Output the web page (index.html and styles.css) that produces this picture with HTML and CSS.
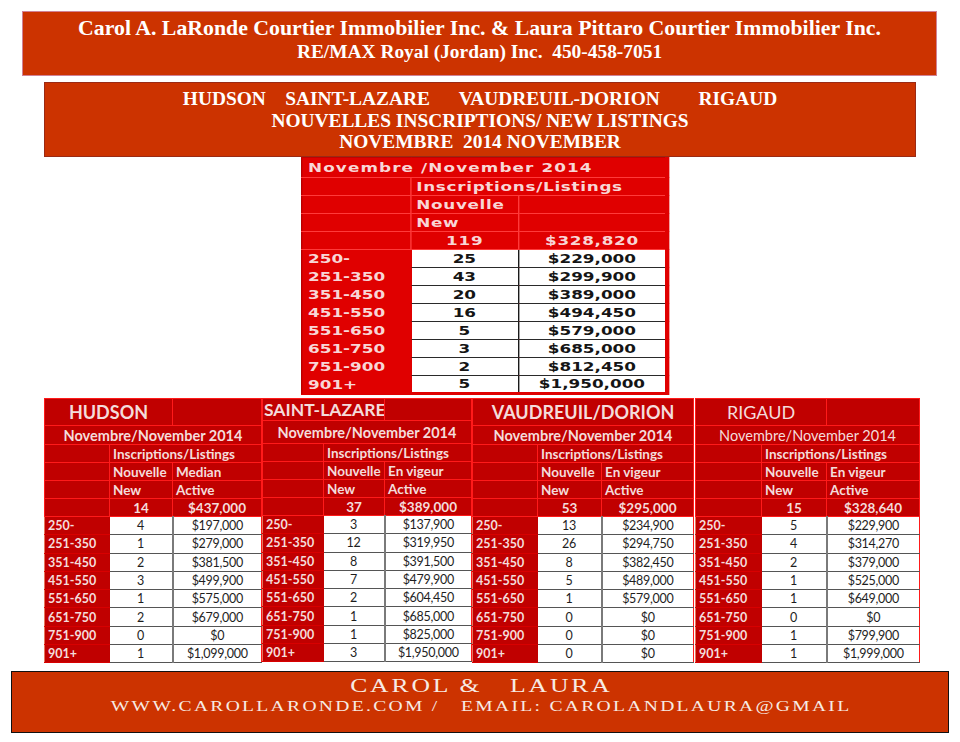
FILE: index.html
```html
<!DOCTYPE html>
<html lang="fr">
<head>
<meta charset="utf-8">
<title>Nouvelles inscriptions - Novembre 2014</title>
<link rel="stylesheet" href="styles.css">
</head>
<body>
<div class="page">
  <header class="top">
    <div class="l1">Carol A. LaRonde Courtier Immobilier Inc. &amp; Laura Pittaro Courtier Immobilier Inc.</div>
    <div class="l2">RE/MAX Royal (Jordan) Inc.  450-458-7051</div>
  </header>

  <section class="banner">
    <div class="bl">HUDSON    SAINT-LAZARE      VAUDREUIL-DORION        RIGAUD</div>
    <div class="bl">NOUVELLES INSCRIPTIONS/ NEW LISTINGS</div>
    <div class="bl">NOVEMBRE  2014 NOVEMBER</div>
  </section>

  <div class="summary">
    <table class="sum">
      <colgroup><col class="s1"><col class="s2"><col class="s3"></colgroup>
      <tr class="s-title"><td colspan="3">Novembre /November 2014</td></tr>
      <tr class="s-h"><td></td><td colspan="2" class="hl wide">Inscriptions/Listings</td></tr>
      <tr class="s-h"><td></td><td class="hl">Nouvelle</td><td></td></tr>
      <tr class="s-h"><td></td><td class="hl">New</td><td></td></tr>
      <tr class="s-h"><td></td><td class="hc">119</td><td class="hc">$328,820</td></tr>
      <tr class="d"><th>250-</th><td>25</td><td>$229,000</td></tr>
      <tr class="d"><th>251-350</th><td>43</td><td>$299,900</td></tr>
      <tr class="d"><th>351-450</th><td>20</td><td>$389,000</td></tr>
      <tr class="d"><th>451-550</th><td>16</td><td>$494,450</td></tr>
      <tr class="d"><th>551-650</th><td>5</td><td>$579,000</td></tr>
      <tr class="d"><th>651-750</th><td>3</td><td>$685,000</td></tr>
      <tr class="d"><th>751-900</th><td>2</td><td>$812,450</td></tr>
      <tr class="d last"><th>901+</th><td>5</td><td>$1,950,000</td></tr>
    </table>
  </div>

  <div class="cities">
    <table class="city hudson">
      <colgroup><col class="c1"><col class="c2"><col class="c3"></colgroup>
      <tr class="t-title"><td colspan="2" class="title center">HUDSON</td><td></td></tr>
      <tr class="t-month"><td colspan="3" class="month">Novembre/November 2014</td></tr>
      <tr class="t-h"><td></td><td colspan="2" class="hl">Inscriptions/Listings</td></tr>
      <tr class="t-h"><td></td><td class="hl">Nouvelle</td><td class="hl">Median</td></tr>
      <tr class="t-h"><td></td><td class="hl">New</td><td class="hl">Active</td></tr>
      <tr class="t-h"><td></td><td class="hc">14</td><td class="hc">$437,000</td></tr>
      <tr class="d"><th>250-</th><td>4</td><td>$197,000</td></tr>
      <tr class="d"><th>251-350</th><td>1</td><td>$279,000</td></tr>
      <tr class="d"><th>351-450</th><td>2</td><td>$381,500</td></tr>
      <tr class="d"><th>451-550</th><td>3</td><td>$499,900</td></tr>
      <tr class="d"><th>551-650</th><td>1</td><td>$575,000</td></tr>
      <tr class="d"><th>651-750</th><td>2</td><td>$679,000</td></tr>
      <tr class="d"><th>751-900</th><td>0</td><td>$0</td></tr>
      <tr class="d"><th>901+</th><td>1</td><td>$1,099,000</td></tr>
    </table>

    <table class="city lazare">
      <colgroup><col class="c1"><col class="c2"><col class="c3"></colgroup>
      <tr class="t-title"><td colspan="2" class="title left">SAINT-LAZARE</td><td></td></tr>
      <tr class="t-month"><td colspan="3" class="month">Novembre/November 2014</td></tr>
      <tr class="t-h"><td></td><td colspan="2" class="hl">Inscriptions/Listings</td></tr>
      <tr class="t-h"><td></td><td class="hl">Nouvelle</td><td class="hl">En vigeur</td></tr>
      <tr class="t-h"><td></td><td class="hl">New</td><td class="hl">Active</td></tr>
      <tr class="t-h"><td></td><td class="hc">37</td><td class="hc">$389,000</td></tr>
      <tr class="d"><th>250-</th><td>3</td><td>$137,900</td></tr>
      <tr class="d"><th>251-350</th><td>12</td><td>$319,950</td></tr>
      <tr class="d"><th>351-450</th><td>8</td><td>$391,500</td></tr>
      <tr class="d"><th>451-550</th><td>7</td><td>$479,900</td></tr>
      <tr class="d"><th>551-650</th><td>2</td><td>$604,450</td></tr>
      <tr class="d"><th>651-750</th><td>1</td><td>$685,000</td></tr>
      <tr class="d"><th>751-900</th><td>1</td><td>$825,000</td></tr>
      <tr class="d"><th>901+</th><td>3</td><td>$1,950,000</td></tr>
    </table>

    <table class="city vaudreuil">
      <colgroup><col class="c1"><col class="c2"><col class="c3"></colgroup>
      <tr class="t-title"><td colspan="3" class="title center">VAUDREUIL/DORION</td></tr>
      <tr class="t-month"><td colspan="3" class="month">Novembre/November 2014</td></tr>
      <tr class="t-h"><td></td><td colspan="2" class="hl">Inscriptions/Listings</td></tr>
      <tr class="t-h"><td></td><td class="hl">Nouvelle</td><td class="hl">En vigeur</td></tr>
      <tr class="t-h"><td></td><td class="hl">New</td><td class="hl">Active</td></tr>
      <tr class="t-h"><td></td><td class="hc">53</td><td class="hc">$295,000</td></tr>
      <tr class="d"><th>250-</th><td>13</td><td>$234,900</td></tr>
      <tr class="d"><th>251-350</th><td>26</td><td>$294,750</td></tr>
      <tr class="d"><th>351-450</th><td>8</td><td>$382,450</td></tr>
      <tr class="d"><th>451-550</th><td>5</td><td>$489,000</td></tr>
      <tr class="d"><th>551-650</th><td>1</td><td>$579,000</td></tr>
      <tr class="d"><th>651-750</th><td>0</td><td>$0</td></tr>
      <tr class="d"><th>751-900</th><td>0</td><td>$0</td></tr>
      <tr class="d"><th>901+</th><td>0</td><td>$0</td></tr>
    </table>

    <table class="city rigaud">
      <colgroup><col class="c1"><col class="c2"><col class="c3"></colgroup>
      <tr class="t-title"><td colspan="2" class="title center light">RIGAUD</td><td></td></tr>
      <tr class="t-month"><td colspan="3" class="month light">Novembre/November 2014</td></tr>
      <tr class="t-h"><td></td><td colspan="2" class="hl">Inscriptions/Listings</td></tr>
      <tr class="t-h"><td></td><td class="hl">Nouvelle</td><td class="hl">En vigeur</td></tr>
      <tr class="t-h"><td></td><td class="hl">New</td><td class="hl">Active</td></tr>
      <tr class="t-h"><td></td><td class="hc">15</td><td class="hc">$328,640</td></tr>
      <tr class="d"><th>250-</th><td>5</td><td>$229,900</td></tr>
      <tr class="d"><th>251-350</th><td>4</td><td>$314,270</td></tr>
      <tr class="d"><th>351-450</th><td>2</td><td>$379,000</td></tr>
      <tr class="d"><th>451-550</th><td>1</td><td>$525,000</td></tr>
      <tr class="d"><th>551-650</th><td>1</td><td>$649,000</td></tr>
      <tr class="d"><th>651-750</th><td>0</td><td>$0</td></tr>
      <tr class="d"><th>751-900</th><td>1</td><td>$799,900</td></tr>
      <tr class="d"><th>901+</th><td>1</td><td>$1,999,000</td></tr>
    </table>
  </div>

  <footer class="foot">
    <div class="f1">CAROL &amp;   LAURA</div>
    <div class="f2">WWW.CAROLLARONDE.COM /   EMAIL: CAROLANDLAURA@GMAIL</div>
  </footer>
</div>
</body>
</html>
```

FILE: styles.css
```css
* { box-sizing: border-box; }

body {
  margin: 0;
  background: #ffffff;
}

.page {
  width: 960px;
  height: 742px;
  overflow: hidden;
}

/* ---------- top header ---------- */
.top {
  margin: 11px 0 0 22px;
  width: 915px;
  height: 65px;
  padding-top: 3px;
  background: #cc3300;
  border: 1px solid #d08296;
  color: #ffffff;
  font-family: "Liberation Serif", "Times New Roman", serif;
  font-weight: bold;
  text-align: center;
}
.top .l1 { font-size: 21.8px; line-height: 26px; white-space: pre; }
.top .l2 { font-size: 19.4px; line-height: 22px; white-space: pre; }

/* ---------- banner ---------- */
.banner {
  margin: 6px 0 0 44px;
  width: 872px;
  height: 75px;
  padding-top: 5px;
  background: #cc3300;
  border: 1px solid #9a2a14;
  color: #ffffff;
  font-family: "Liberation Serif", "Times New Roman", serif;
  font-weight: bold;
  font-size: 19.4px;
  line-height: 21.5px;
  text-align: center;
}
.banner .bl { white-space: pre; }

/* ---------- summary table (drawn narrow, stretched like the source image) ---------- */
.summary {
  margin-left: 301px;
  width: 263px;
  height: 236px;
}
.sum {
  width: 263px;
  border-collapse: collapse;
  table-layout: fixed;
  transform: scaleX(1.4);
  transform-origin: 0 0;
  background: #e00000;
  border-left: 1.5px solid #b80000;
  border-right: 3px solid #e00000;
  border-top: 1px solid #c40000;
  font-family: "DejaVu Sans", Verdana, sans-serif;
  font-weight: bold;
  font-size: 12px;
  color: #f8d6d6;
}
.sum .s1 { width: 78px; }
.sum .s2 { width: 76px; }
.sum .s3 { width: 106px; }
.sum td, .sum th {
  padding: 0;
  white-space: nowrap;
  overflow: hidden;
}
.sum .s-title td {
  height: 20px;
  padding-left: 4px;
  letter-spacing: 0.8px;
  border-bottom: 1px solid #ff3a3a;
}
.sum .s-h td {
  height: 18px;
  border: 1px solid #ff3a3a;
  letter-spacing: 0.5px;
}
.sum .s-h td:first-child { border-left: none; }
.sum .hl { padding-left: 3px; text-align: left; }
.sum .hc { text-align: center; }
.sum .d th {
  height: 18px;
  padding-left: 4px;
  text-align: left;
  font-weight: bold;
  background: #e00000;
}
.sum .d td {
  height: 18px;
  background: #ffffff;
  color: #151515;
  text-align: center;
  border-bottom: 1px solid #2a2a2a;
}
.sum .d td + td { border-left: 1.5px solid #1a1a1a; }
.sum .d.last td { border-bottom: 3px solid #e00000; }

/* ---------- city tables ---------- */
.cities {
  display: flex;
  align-items: flex-start;
  margin: 5px 0 0 44px;
  height: 266px;
}
.city {
  border-collapse: collapse;
  table-layout: fixed;
  background: #c00000;
  border: 1px solid #e8745c;
  font-family: Lato, "Open Sans", sans-serif;
  font-weight: bold;
  color: #f4dcdb;
}
.city td, .city th {
  padding: 0;
  white-space: nowrap;
  overflow: hidden;
}
.hudson { width: 217px; }
.hudson .c1 { width: 65px; }
.hudson .c2 { width: 63px; }
.hudson .c3 { width: 89px; }
.lazare { width: 209px; }
.lazare .c1 { width: 61px; }
.lazare .c2 { width: 61px; }
.lazare .c3 { width: 87px; }
.vaudreuil { width: 221px; }
.vaudreuil .c1 { width: 65px; }
.vaudreuil .c2 { width: 64px; }
.vaudreuil .c3 { width: 92px; }
.rigaud { width: 224px; margin-left: 1px; }
.rigaud .c1 { width: 66px; }
.rigaud .c2 { width: 65px; }
.rigaud .c3 { width: 93px; }

.city .t-title td {
  height: 27px;
  border: 1px solid #ff1a1a;
  font-size: 18px;
}
.lazare .t-title td { height: 21px; font-size: 17.5px; vertical-align: top; }
.city .title.center { text-align: center; }
.city .title.left { text-align: left; padding-left: 1px; }
.city .light { font-weight: normal; }
.city .t-month td {
  height: 19px;
  border: 1px solid #ff1a1a;
  text-align: center;
  font-size: 14.5px;
}
.lazare .t-month td { height: 23px; }
.city .t-h td {
  height: 18px;
  border: 1px solid #ff1a1a;
  font-size: 13.5px;
}
.city .hl { text-align: left; padding-left: 3px; }
.city .hc { text-align: center; }
.city .d th {
  height: 18.3px;
  text-align: left;
  padding-left: 3px;
  font-size: 12.5px;
  font-weight: bold;
  background: #c00000;
  border-bottom: 1px solid #d80000;
  border-right: none;
}
.city .d td {
  height: 18.3px;
  background: #ffffff;
  color: #1e1e1e;
  text-align: center;
  font-weight: normal;
  font-size: 12.5px;
  letter-spacing: -0.3px;
  border-bottom: 1px solid #555555;
}
.city .d td + td { border-left: 2px solid #7a7a7a; }
.city .d td:last-child { border-right: 1px solid #ff1a1a; }

/* ---------- footer (text stretched like the source image) ---------- */
.foot {
  margin: 7px 0 0 11px;
  width: 938px;
  height: 62px;
  padding-top: 3px;
  background: #cc3300;
  border: 1px solid #111111;
  color: #f7ebe4;
  font-family: "Liberation Serif", "Times New Roman", serif;
  text-align: center;
}
.foot .f1 {
  font-size: 19px;
  line-height: 22px;
  letter-spacing: 2.1px;
  padding-left: 2.1px;
  white-space: pre;
  transform: scaleX(1.35);
}
.foot .f2 {
  font-size: 14.5px;
  line-height: 18px;
  letter-spacing: 1.7px;
  padding-left: 1.7px;
  white-space: pre;
  transform: scaleX(1.35);
}
```
